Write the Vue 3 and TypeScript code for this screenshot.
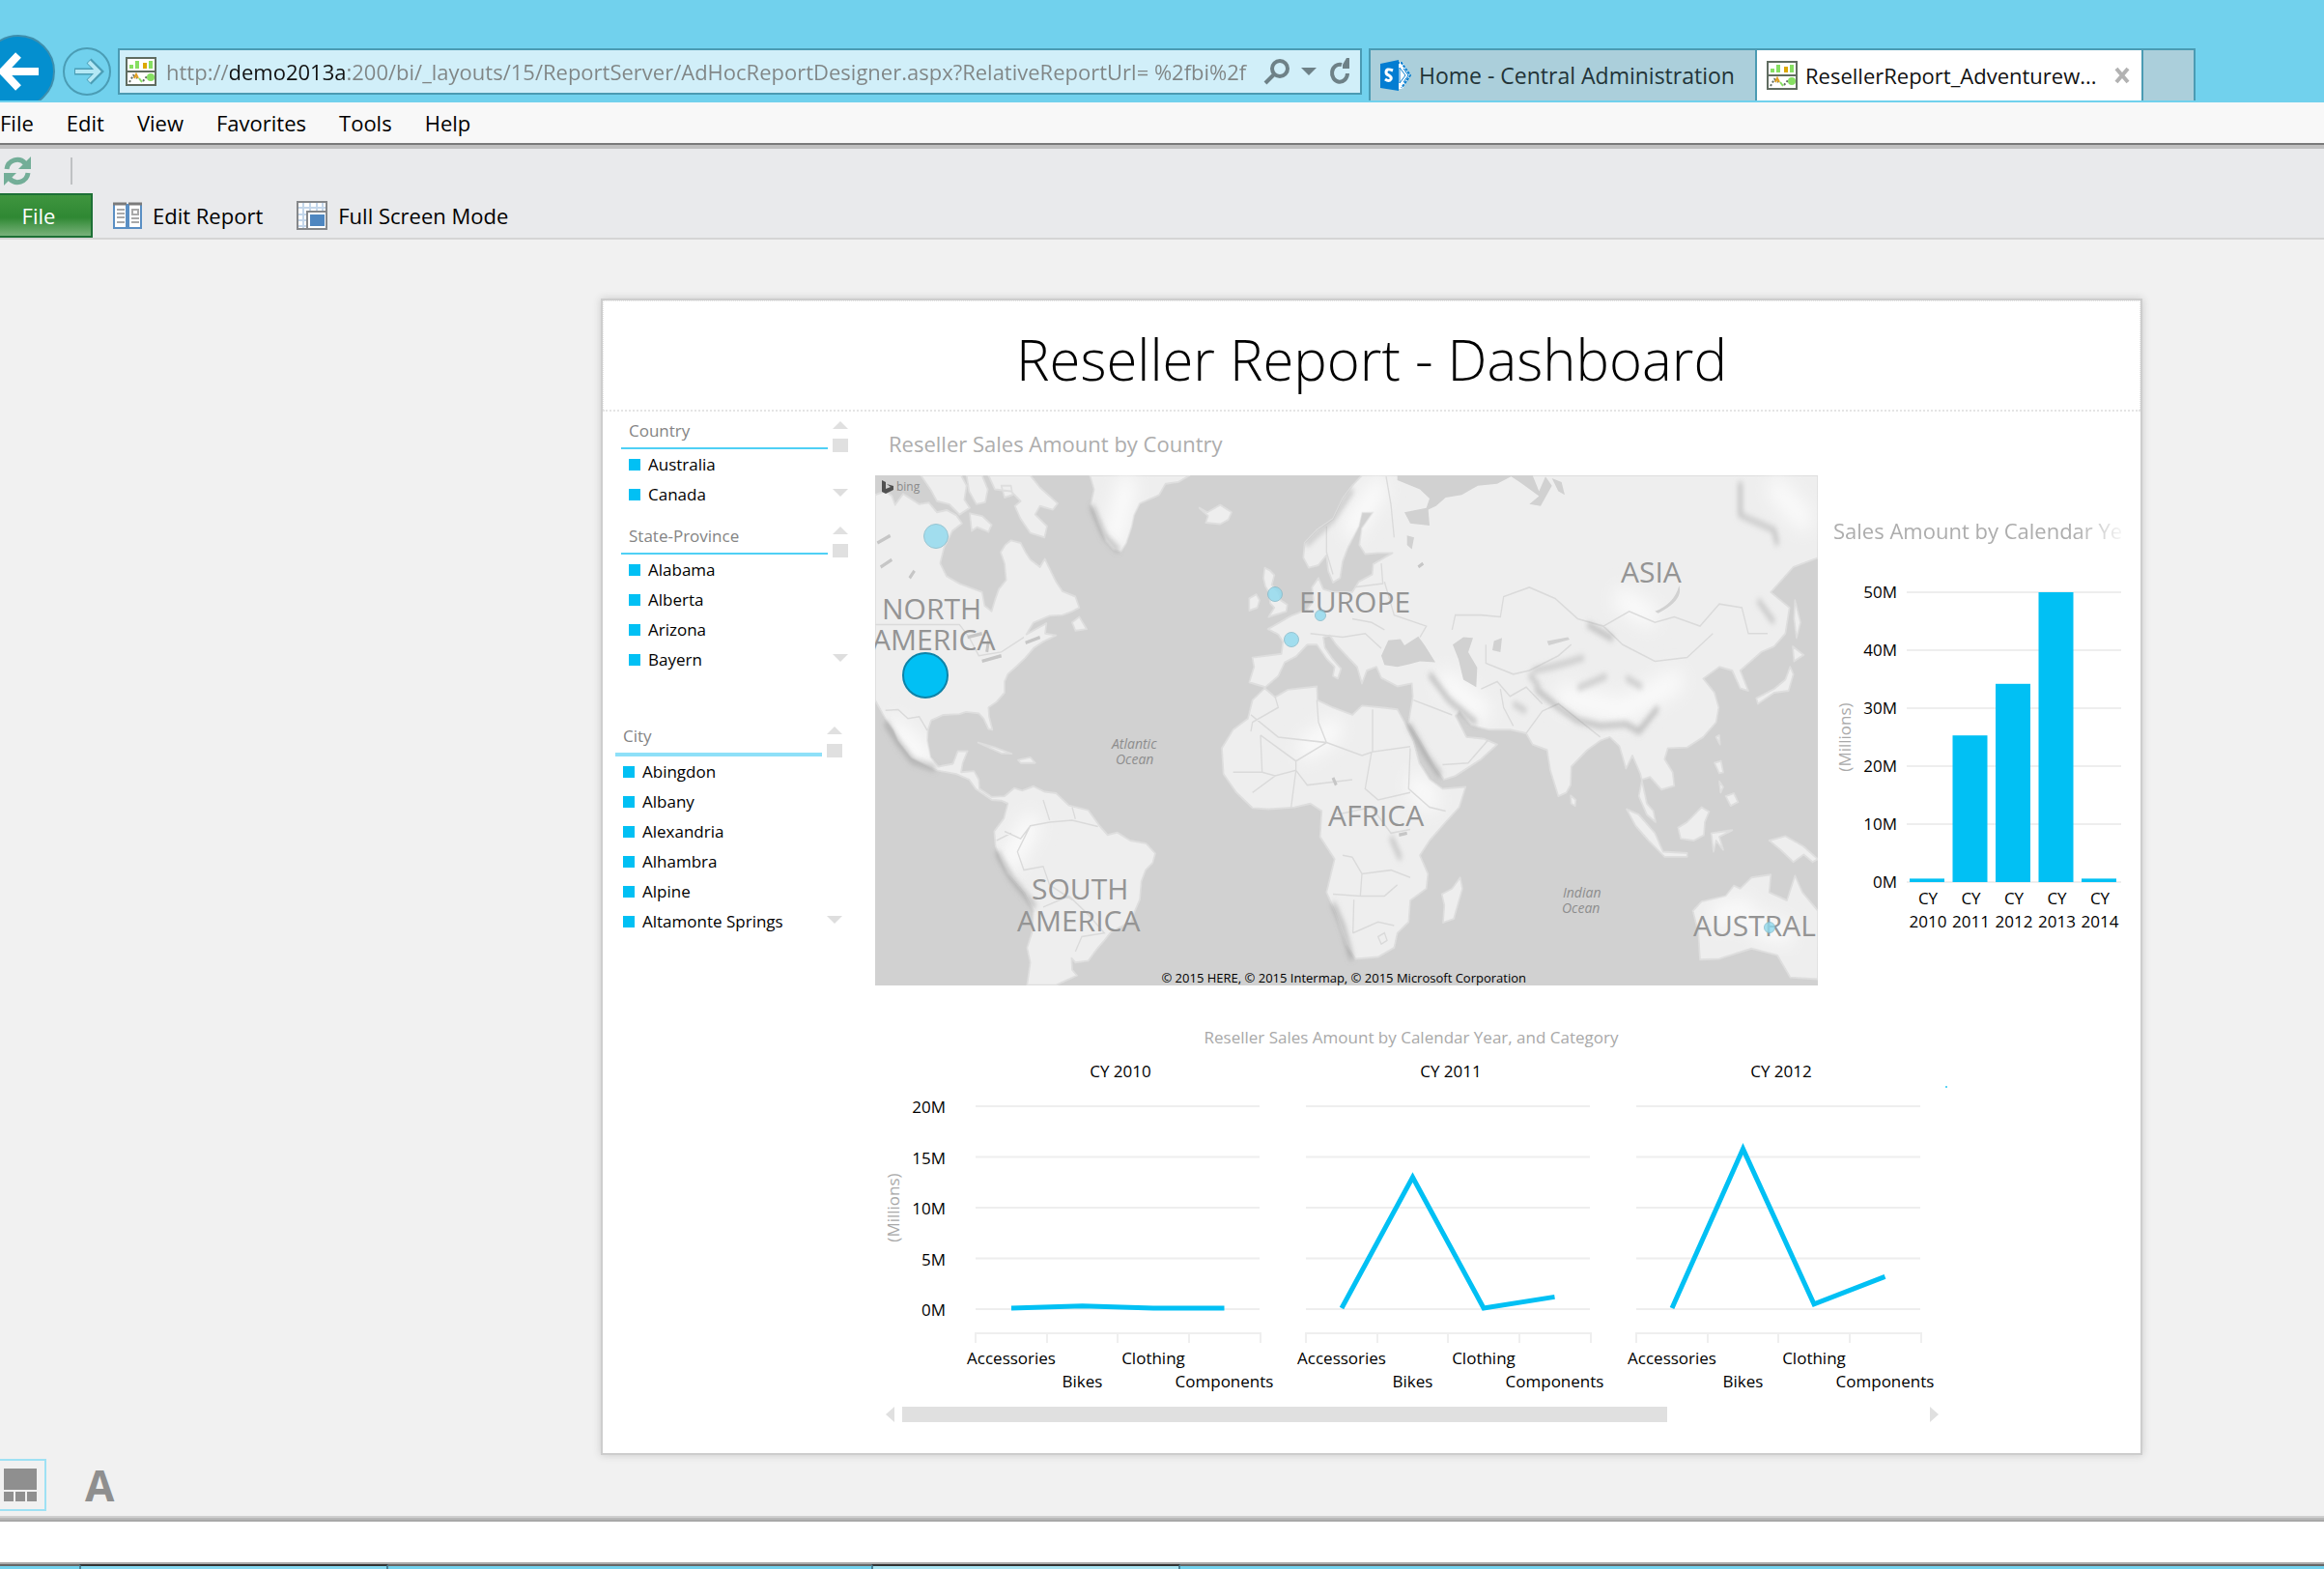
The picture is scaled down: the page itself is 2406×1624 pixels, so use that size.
<script setup lang="ts">
interface Slicer {
  id: string
  title: string
  items: string[]
}

interface MapLabel {
  text: string
  x: number
  y: number
  kind: 'land' | 'ocean'
}

const url =
  'http://demo2013a:200/bi/_layouts/15/ReportServer/AdHocReportDesigner.aspx?RelativeReportUrl= %2fbi%2f'

const menus = ['File', 'Edit', 'View', 'Favorites', 'Tools', 'Help']

const slicers: Slicer[] = [
  { id: 'country', title: 'Country', items: ['Australia', 'Canada'] },
  { id: 'state', title: 'State-Province', items: ['Alabama', 'Alberta', 'Arizona', 'Bayern'] },
  {
    id: 'city',
    title: 'City',
    items: ['Abingdon', 'Albany', 'Alexandria', 'Alhambra', 'Alpine', 'Altamonte Springs'],
  },
]

/* Map labels: left edge and top of the line on a 976 x 528 map */
const mapLabels: MapLabel[] = [
  { text: 'NORTH', x: 7, y: 122, kind: 'land' },
  { text: 'AMERICA', x: -3, y: 154, kind: 'land' },
  { text: 'EUROPE', x: 439, y: 115, kind: 'land' },
  { text: 'ASIA', x: 772, y: 84, kind: 'land' },
  { text: 'AFRICA', x: 469, y: 336, kind: 'land' },
  { text: 'SOUTH', x: 162, y: 412, kind: 'land' },
  { text: 'AMERICA', x: 147, y: 445, kind: 'land' },
  { text: 'AUSTRAL', x: 847, y: 450, kind: 'land' },
  { text: 'Atlantic', x: 245, y: 268, kind: 'ocean' },
  { text: 'Ocean', x: 249, y: 284, kind: 'ocean' },
  { text: 'Indian', x: 712, y: 422, kind: 'ocean' },
  { text: 'Ocean', x: 711, y: 438, kind: 'ocean' },
]

const bubbles = [
  { x: 63, y: 63, r: 13, faded: true },
  { x: 52, y: 207, r: 24, faded: false },
  { x: 414, y: 123, r: 8, faded: true },
  { x: 461, y: 145, r: 6, faded: true },
  { x: 431, y: 170, r: 8, faded: true },
  { x: 926, y: 468, r: 6, faded: true },
]

const pctX = (v: number) => `${(v / 976) * 100}%`
const pctY = (v: number) => `${(v / 528) * 100}%`

/* Landmasses and inland seas */
const land = [
  'M78 215L110 205L130 218L140 242L165 212L215 240L245 236L270 262L300 256L330 270L348 292L318 312L292 358L280 400L300 435L340 455L380 468L410 478L418 515L440 530L450 500L462 470L485 445L480 400L468 370L482 350L500 338L530 345L545 370L560 390L590 410L605 388L640 450L660 476L700 490L712 520L690 530L660 540L620 542L570 560L548 592L610 562L606 590L640 595L600 612L572 628L545 655L520 676L490 700L480 720L480 750L455 775L430 790L432 815L442 850L430 848L415 820L400 806L360 802L340 808L290 810L252 825L242 850L240 880L250 925L275 950L320 942L335 908L365 908L350 940L345 965L385 962L400 985L402 1010L440 1032L480 1030L510 1008L535 1015L570 1003L605 1018L640 1022L680 1055L740 1068L775 1110L800 1135L830 1128L870 1150L920 1158L948 1185L940 1210L918 1230L905 1260L900 1310L870 1370L840 1384L810 1398L790 1420L770 1440L740 1475L700 1480L688 1468L690 1500L705 1515L640 1541L550 1541L560 1480L550 1440L565 1400L570 1340L540 1290L490 1240L465 1195L452 1165L448 1125L478 1090L490 1050L470 1042L440 1040L390 1010L370 985L330 970L270 960L190 925L150 880L135 850L110 820L78 770Z',
  'M220 162L345 162L362 190L355 228L372 250L340 268L308 240L270 232L250 200ZM372 265L410 272L440 296L430 315L395 302L378 312ZM362 162L410 162L428 200L420 235L392 240L370 205ZM430 162L560 162L590 195L645 238L630 255L590 245L575 268L612 300L604 330L560 318L530 280L512 245L530 232L500 205L450 200Z',
  'M470 190L500 190L505 215L480 222Z',
  'M745 162L1055 162L1020 180L980 185L960 215L900 238L882 270L875 300L858 345L842 368L818 362L795 340L770 290L748 240L758 200Z',
  'M1085 250L1110 262L1150 242L1185 262L1175 282L1150 294L1105 290L1112 272Z',
  'M1240 495L1262 484L1272 500L1265 520L1240 528ZM1288 412L1305 420L1318 432L1310 458L1330 480L1338 500L1358 512L1355 530L1300 545L1318 520L1305 508L1302 480L1290 462L1284 440Z',
  'M1560 190L1530 225L1500 280L1450 310L1412 345L1408 385L1425 412L1455 405L1480 378L1485 420L1500 452L1522 440L1530 395L1545 360L1580 300L1590 262L1625 262L1590 305L1582 350L1600 375L1640 372L1685 372L1625 402L1622 430L1580 450L1560 478L1500 478L1470 470L1455 440L1435 465L1440 500L1420 525L1370 542L1330 562L1298 578L1330 592L1345 612L1340 645L1250 655L1255 680L1240 722L1290 735L1330 705L1350 668L1385 652L1420 620L1450 620L1480 658L1505 680L1500 705L1515 712L1525 685L1500 660L1475 628L1470 600L1490 595L1510 620L1540 648L1575 680L1590 725L1605 690L1635 680L1650 710L1700 733L1745 725L1748 760L1735 830L1770 880L1815 950L1845 985L1880 975L1960 930L2010 890L1970 875L1915 870L1880 812L1893 800L1930 838L1985 850L2050 850L2100 860L2120 890L2165 905L2175 960L2200 1030L2225 1020L2238 1000L2240 950L2290 905L2330 880L2360 870L2390 895L2410 955L2430 920L2455 970L2475 1050L2495 1070L2502 1100L2475 1080L2450 1030L2460 985L2485 978L2520 1012L2560 1002L2555 965L2530 930L2540 900L2600 898L2650 870L2690 830L2698 790L2685 750L2650 712L2700 680L2740 690L2765 738L2790 745L2765 690L2830 640L2870 625L2905 590L2918 520L2860 478L2930 410L3006 385L3006 162L1590 162Z',
  'M1288 738L1320 762L1360 742L1450 733L1452 770L1500 790L1560 810L1590 785L1650 790L1700 795L1722 830L1750 880L1768 940L1800 985L1840 1010L1912 1005L1892 1060L1850 1100L1800 1150L1770 1190L1795 1240L1790 1280L1740 1312L1735 1370L1700 1400L1690 1440L1640 1465L1570 1470L1540 1430L1510 1350L1480 1290L1505 1200L1460 1140L1465 1070L1430 1050L1380 1060L1300 1065L1250 1062L1200 1020L1160 970L1155 900L1190 850L1236 820L1250 770Z',
  'M1895 1250L1902 1280L1875 1362L1842 1372L1846 1325L1838 1295L1870 1280ZM2238 1028L2254 1040L2252 1056L2240 1050Z',
  'M2412 1065L2450 1080L2500 1130L2525 1180L2600 1184L2600 1194L2530 1194L2480 1150L2440 1110ZM2572 1115L2600 1100L2645 1060L2668 1072L2655 1100L2652 1135L2620 1150L2580 1145ZM2685 940L2705 935L2712 965L2700 968ZM2720 1030L2745 1022L2758 1046L2735 1056ZM2700 990L2712 1005L2704 1020ZM2675 1130L2740 1122L2700 1140L2712 1175L2690 1150L2682 1180ZM2855 1150L2905 1138L2960 1165L3006 1200L2990 1208L2962 1188L2930 1208L2890 1175ZM2690 870L2700 865L2702 890Z',
  'M2618 1340L2645 1315L2720 1300L2745 1272L2765 1280L2800 1250L2860 1242L2855 1290L2910 1312L2935 1245L2958 1290L3006 1340L3006 1525L2920 1520L2880 1460L2800 1442L2700 1470L2640 1472L2635 1400Z',
  'M2928 625L2962 648L2932 665ZM2920 680L2930 700L2915 745L2870 750L2820 780L2815 765L2870 740L2905 715ZM2935 500L2952 560L2940 602L2932 550Z',
  'M398 885L450 898L502 915L470 914ZM522 932L560 925L575 940L530 940ZM690 560L712 545L735 578L700 582Z',
].join('')

const seas = [
  'M1700 162L2060 162L2010 185L1950 190L1900 215L1850 222L1820 245L1796 255L1800 298L1740 292L1722 262L1790 250L1800 225L1770 200L1700 175Z',
  'M2048 162L2120 162L2140 205L2160 165L2180 190L2145 245L2110 240L2140 218L2080 180ZM2180 170L2210 180L2220 215L2200 205Z',
  'M1650 650L1672 608L1710 605L1722 622L1765 598L1785 622L1818 668L1770 665L1740 672L1700 680L1660 675Z',
  'M1872 620L1905 600L1935 602L1920 640L1948 682L1945 735L1905 715L1890 660Z',
  'M2000 610L2025 602L2020 640L1995 635ZM2165 610L2230 600L2235 606L2170 622Z',
  'M1730 325L1752 330L1745 362L1730 350ZM2500 530Q2560 510 2575 460Q2590 500 2510 535Z',
].join('')

const borders = [
  'M78 566L340 566L370 600L400 650L470 640L540 600',
  'M110 798L150 796L180 820L215 815L240 852',
  'M480 1125L530 1145L560 1110L620 1100L690 1095L770 1112M560 1110L520 1180L540 1230L600 1220L620 1270L690 1310M455 1150L500 1130M600 1040L620 1095M690 1060L700 1092M600 1330L680 1300L740 1350L790 1400L720 1410L700 1450',
  'M1245 810L1330 870L1480 885L1590 920M1320 760L1330 790L1250 830L1245 855M1450 770L1455 830L1480 885L1385 935L1385 960M1275 865L1280 965L1190 965M1275 865L1385 935M1623 795L1623 910L1740 896M1590 920L1623 910M1620 910L1600 1010L1640 1040L1740 1020M1280 965L1320 975L1385 960L1420 1000L1560 985M1320 975L1250 1020M1385 960L1370 1060M1740 900L1735 1010L1800 1060L1850 1070M1530 1190L1560 1195L1590 1240L1680 1230L1740 1250M1590 1240L1585 1300L1500 1295M1585 1300L1660 1300L1700 1270M1562 1400L1565 1310M1562 1400L1640 1370L1690 1380M1510 1080L1620 1060L1680 1130L1740 1120M1640 1410L1660 1400L1668 1420L1650 1430Z',
  'M1480 300L1480 370L1500 430M1665 165L1680 240L1690 330M1650 400L1655 455L1560 465M1660 450L1690 540L1790 570L1770 600M1430 590L1530 600L1600 590L1650 630M1560 550L1620 560L1660 580M1870 580L1880 540L1960 540L2020 545L2030 490L2110 465L2190 495L2260 550L2340 570L2420 530L2500 560L2560 545L2640 570L2700 510L2770 520L2790 590L2850 590M2340 570L2400 620L2500 665L2600 655L2680 590M1975 620L1975 670L2060 700L2110 690L2200 650L2240 620M1960 740L2010 720L2050 760L2100 735L2150 780M1750 770L1810 790L1870 810M1840 945L1920 940L1990 870M2100 860L2150 800L2200 780L2330 870M2020 740L2030 790L2060 840',
].join('')

const ridges = [
  'M110 830L150 885L195 935L265 955',
  'M455 1180L500 1250L575 1330',
  'M750 245L790 325L835 366',
  'M1800 700L1860 770L1945 832',
  'M1735 835L1790 920L1835 975',
  'M2130 740L2200 790L2260 825L2330 840L2410 835L2450 855L2510 790',
  'M2290 565L2370 605',
  'M1500 1320L1530 1380L1558 1470',
].join('')

const slopes = [
  'M2765 180L2765 270L2870 310L2880 350',
  'M2120 690L2180 680L2280 655',
  'M2260 738L2350 705M2410 710L2460 735M2060 780L2100 800M2140 735L2110 700',
  'M1560 200L1500 280L1415 350M2820 500L2870 560M1680 1140L1710 1200',
].join('')

const lakes = 'M85 345L125 325M95 410L130 390M185 440L200 420M410 665L470 650M365 600L410 590M430 610L425 640M1705 1135L1730 1130M1765 410L1780 400M545 615L590 600M1500 980L1510 1000'

const highlights = 'M1960 800L1850 720M2220 760L2400 800L2560 720M1500 850L1420 900M820 330L860 190M140 850L230 930M2820 1380L2900 1400M2400 500L2480 540M1640 200L1560 300M2880 200L2960 280M560 1110L500 1200M1760 1000L1800 1040M2700 1350L2780 1340'

/* Column chart, values in millions */
const columns = [
  { year: '2010', value: 0.6 },
  { year: '2011', value: 25.3 },
  { year: '2012', value: 34.2 },
  { year: '2013', value: 50 },
  { year: '2014', value: 0.6 },
]
const columnTicks = [50, 40, 30, 20, 10, 0]
const columnY = (v: number) => 348 - v * 6

/* Line chart small multiples, values in millions */
const panels = [
  { title: 'CY 2010', values: [0.1, 0.3, 0.1, 0.1] },
  { title: 'CY 2011', values: [0.1, 13, 0.1, 1.2] },
  { title: 'CY 2012', values: [0.1, 15.8, 0.5, 3.2] },
]
const categories = ['Accessories', 'Bikes', 'Clothing', 'Components']
const lineTicks = [20, 15, 10, 5, 0]
const lineY = (v: number) => 335 - v * 10.5
const panelX = (i: number) => 104 + i * 342
const pointX = (i: number) => 37 + i * 73.5
const points = (values: number[]) =>
  values.map((v, i) => `${pointX(i)},${lineY(v)}`).join(' ')
</script>

<template>
  <div class="window">
    <header class="chrome">
      <button class="back" type="button" aria-label="Back">
        <svg width="76" height="76" viewBox="0 0 76 76">
          <circle cx="38" cy="38" r="37" fill="#048fcf" stroke="#3f8fad" stroke-width="2" />
          <path d="M59 38H23M38 21L22 38L38 55" fill="none" stroke="#fff" stroke-width="8" />
        </svg>
      </button>
      <button class="forward" type="button" aria-label="Forward">
        <svg width="52" height="52" viewBox="0 0 52 52">
          <circle cx="26" cy="26" r="24" fill="none" stroke="#4b9db5" stroke-width="2" />
          <path d="M13 26H38M28 15L39 26L28 37" fill="none" stroke="#4b9db5" stroke-width="7" />
          <path d="M14 26H38M28 16L38 26L28 36" fill="none" stroke="#b4e8f5" stroke-width="4" />
        </svg>
      </button>
      <form class="address" @submit.prevent>
        <svg class="site-icon" width="32" height="30" viewBox="0 0 32 30">
          <path d="M1 1H31V29H1Z" fill="#fff" stroke="#606c60" stroke-width="2" />
          <path d="M1 15H31" stroke="#606c60" stroke-width="2" />
          <path d="M4 8H8V12H4ZM10 4H14V12H10ZM24 4H28V12H24Z" fill="#86df62" />
          <path d="M18 6H22V12H18Z" fill="#dca800" />
          <path d="M4 26L8 19L12 22M18 25L23 19" fill="none" stroke="#606c60" stroke-width="2" stroke-dasharray="2 2" />
          <path d="M9 22L11 18L13 22" fill="none" stroke="#e0a020" stroke-width="2" />
          <path d="M14 22L17 26" stroke="#86df62" stroke-width="2" />
          <circle cx="26" cy="21" r="4" fill="#86df62" />
        </svg>
        <input class="url" type="text" aria-label="Address" :value="url" />
        <button type="button" aria-label="Search">
          <svg width="28" height="28" viewBox="0 0 28 28" fill="none" stroke="#6e8187" stroke-width="4">
            <circle cx="17" cy="11" r="8" />
            <path d="M11 17L2 26" />
          </svg>
        </button>
        <button type="button" aria-label="Show address list">
          <svg width="16" height="10" viewBox="0 0 16 10"><path d="M0 1H16L8 9Z" fill="#6e8187" /></svg>
        </button>
        <button type="button" aria-label="Refresh page">
          <svg width="24" height="28" viewBox="0 0 24 28">
            <path d="M13 7A8 9 0 1 0 19 16" fill="none" stroke="#6e8187" stroke-width="4" />
            <path d="M14 11V7L18 0H21V11Z" fill="#6e8187" />
          </svg>
        </button>
      </form>
      <nav class="tabs" aria-label="Tabs">
        <a class="tab" href="#">
          <svg width="32" height="32" viewBox="0 0 32 32">
            <path d="M15 2H23L31 16L23 30H15Z" fill="#fff" />
            <path d="M17 3H22L31 16L22 29" fill="none" stroke="#0a7fd0" stroke-width="2" stroke-dasharray="3 1" />
            <path d="M0 4L19 0V32L0 29Z" fill="#037dd2" />
            <path d="M13 11Q6 8 6 13Q6 15 9 16Q12 18 11 20Q9 23 5 20" fill="none" stroke="#fff" stroke-width="3" />
            <path d="M20 8L26 16L20 24ZM24 9L29 16L24 23" fill="#fff" stroke="#0a7fd0" stroke-width="1" />
          </svg>
          <span>Home - Central Administration</span>
        </a>
        <a class="tab active" href="#" aria-current="page">
          <svg width="32" height="30" viewBox="0 0 32 30">
            <path d="M1 1H31V29H1Z" fill="#fff" stroke="#606c60" stroke-width="2" />
            <path d="M1 15H31" stroke="#606c60" stroke-width="2" />
            <path d="M4 8H8V12H4ZM10 4H14V12H10ZM24 4H28V12H24Z" fill="#86df62" />
            <path d="M18 6H22V12H18Z" fill="#dca800" />
            <path d="M4 26L8 19L12 22M18 25L23 19" fill="none" stroke="#606c60" stroke-width="2" stroke-dasharray="2 2" />
            <path d="M9 22L11 18L13 22" fill="none" stroke="#e0a020" stroke-width="2" />
            <path d="M14 22L17 26" stroke="#86df62" stroke-width="2" />
            <circle cx="26" cy="21" r="4" fill="#86df62" />
          </svg>
          <span>ResellerReport_Adventurew...</span>
          <svg class="close" width="18" height="18" viewBox="0 0 18 18">
            <path d="M3 2L15 16M15 2L3 16" stroke="#b2b2b2" stroke-width="4" />
          </svg>
        </a>
        <button class="new-tab" type="button" aria-label="New tab"></button>
      </nav>
    </header>

    <nav class="menubar" aria-label="Menu">
      <button v-for="m in menus" :key="m" type="button">{{ m }}</button>
    </nav>

    <section class="ribbon">
      <div class="quick">
        <button type="button" aria-label="Refresh">
          <svg width="30" height="30" viewBox="0 0 30 30">
            <path d="M4 13A11 11 0 0 1 23 7" fill="none" stroke="#73ae98" stroke-width="5" />
            <path d="M29 0V13H16Z" fill="#73ae98" />
            <path d="M26 17A11 11 0 0 1 7 23" fill="none" stroke="#73ae98" stroke-width="5" />
            <path d="M1 30V17H14Z" fill="#73ae98" />
          </svg>
        </button>
        <span class="divider"></span>
      </div>
      <div class="commands">
        <button class="file" type="button">File</button>
        <button class="command" type="button">
          <svg width="30" height="28" viewBox="0 0 30 28">
            <path d="M1 2V27H14V2M16 2V27H29V2" fill="#fff" stroke="#5a8fc4" stroke-width="2" />
            <path d="M0 2H14M16 2H30" stroke="#7b7b7b" stroke-width="3" />
            <path d="M4 8H12M4 12H12M4 16H12M4 21H12M19 17H27M19 21H27" stroke="#a9a9a9" stroke-width="2" />
            <path d="M20 8H26V13H20Z" fill="none" stroke="#a9a9a9" stroke-width="2" />
          </svg>
          <span>Edit Report</span>
        </button>
        <button class="command" type="button">
          <svg width="32" height="30" viewBox="0 0 32 30">
            <path d="M1 1H31V29H1Z" fill="#fff" stroke="#85878a" stroke-width="2" />
            <path d="M2 7H30M7 2V28M14 2V10M21 2V10M27 2V10M2 14H10M2 20H10M2 26H10" stroke="#c3d6ea" stroke-width="2" />
            <path d="M11 11H31V29H11Z" fill="#fff" stroke="#85878a" stroke-width="2" />
            <path d="M14 14H29V26H14Z" fill="#4e86c0" />
          </svg>
          <span>Full Screen Mode</span>
        </button>
      </div>
    </section>

    <main class="stage">
      <article class="report">
        <h1>Reseller Report - Dashboard</h1>
        <div class="body">
          <aside class="slicers">
            <section v-for="s in slicers" :key="s.id" class="slicer" :class="s.id">
              <div class="slicer-list">
                <h2>{{ s.title }}</h2>
                <ul>
                  <li v-for="item in s.items" :key="item">{{ item }}</li>
                </ul>
              </div>
              <div class="scroll-v">
                <svg width="16" height="8" viewBox="0 0 16 8"><path d="M8 0L16 8H0Z" fill="#e0e0e0" /></svg>
                <span class="thumb-v"></span>
                <svg class="down" width="16" height="8" viewBox="0 0 16 8"><path d="M0 0H16L8 8Z" fill="#dedede" /></svg>
              </div>
            </section>
          </aside>

          <div class="visuals">
            <div class="top-row">
              <figure class="map-figure">
                <figcaption>Reseller Sales Amount by Country</figcaption>
                <div class="map">
                  <svg class="terrain" viewBox="78 162 2928 1380" preserveAspectRatio="none">
                    <defs>
                      <clipPath id="land-clip"><path :d="land" /></clipPath>
                      <filter id="soft" x="-5%" y="-5%" width="110%" height="110%">
                        <feGaussianBlur stdDeviation="8" />
                      </filter>
                      <filter id="haze" x="-5%" y="-5%" width="110%" height="110%">
                        <feGaussianBlur stdDeviation="26" />
                      </filter>
                      <filter id="edge"><feGaussianBlur stdDeviation="2" /></filter>
                    </defs>
                    <rect x="78" y="162" width="2928" height="1380" fill="#d1d1d1" />
                    <path :d="land" fill="#eeeeee" stroke="#dedede" stroke-width="5" stroke-linejoin="round" filter="url(#edge)" />
                    <g clip-path="url(#land-clip)">
                      <path :d="highlights" fill="none" stroke="#fbfbfb" stroke-width="60" stroke-linecap="round" filter="url(#haze)" />
                      <path :d="borders" fill="none" stroke="#dadada" stroke-width="4" />
                      <path :d="slopes" fill="none" stroke="#b4b4b4" stroke-opacity="0.7" stroke-width="14" stroke-linejoin="round" filter="url(#soft)" />
                      <path :d="seas" fill="#d1d1d1" filter="url(#edge)" />
                    </g>
                    <path :d="ridges" fill="none" stroke="#8c8c8c" stroke-opacity="0.55" stroke-width="14" stroke-linejoin="round" filter="url(#soft)" />
                    <path :d="lakes" fill="none" stroke="#c6c6c6" stroke-width="9" filter="url(#edge)" />
                  </svg>
                  <span
                    v-for="(l, i) in mapLabels"
                    :key="i"
                    class="map-label"
                    :class="l.kind"
                    :style="{ left: pctX(l.x), top: pctY(l.y) }"
                  >{{ l.text }}</span>
                  <span
                    v-for="(b, i) in bubbles"
                    :key="i"
                    class="bubble"
                    :class="{ faded: b.faded }"
                    :style="{ left: pctX(b.x), top: pctY(b.y), width: `${b.r * 2}px`, height: `${b.r * 2}px` }"
                  ></span>
                  <span class="bing">
                    <svg width="14" height="14" viewBox="0 0 14 14"><path d="M1 0L5 2V9L10 7L6 4L13 6V10L5 14L1 12Z" fill="#505050" /></svg>
                    bing
                  </span>
                  <small class="credit">© 2015 HERE, © 2015 Intermap, © 2015 Microsoft Corporation</small>
                </div>
              </figure>

              <figure class="column-figure">
                <figcaption>Sales Amount by Calendar Year</figcaption>
                <svg class="chart" viewBox="0 0 334 455">
                  <g v-for="t in columnTicks" :key="t">
                    <line x1="92" x2="314" :y1="columnY(t)" :y2="columnY(t)" stroke="#eeeeee" stroke-width="2" />
                    <text x="82" :y="columnY(t) + 6" text-anchor="end">{{ t }}M</text>
                  </g>
                  <g v-for="(c, i) in columns" :key="c.year">
                    <rect :x="95 + i * 44.5" :y="columnY(c.value)" width="36" :height="348 - columnY(c.value)" fill="#01c0f4" />
                    <text :x="114 + i * 44.5" y="371" text-anchor="middle">CY</text>
                    <text :x="114 + i * 44.5" y="395" text-anchor="middle">{{ c.year }}</text>
                  </g>
                  <text class="axis-title" transform="translate(34 198) rotate(-90)" text-anchor="middle">(Millions)</text>
                </svg>
              </figure>
            </div>

            <figure class="line-figure">
              <svg class="chart" viewBox="0 0 1310 428">
                <text class="axis-title" x="555" y="60" text-anchor="middle">Reseller Sales Amount by Calendar Year, and Category</text>
                <text v-for="t in lineTicks" :key="t" x="73" :y="lineY(t) + 7" text-anchor="end">{{ t }}M</text>
                <text class="axis-title" transform="translate(25 230) rotate(-90)" text-anchor="middle">(Millions)</text>
                <g v-for="(p, i) in panels" :key="p.title" :transform="`translate(${panelX(i)} 0)`">
                  <text x="150" y="95" text-anchor="middle">{{ p.title }}</text>
                  <line v-for="t in lineTicks" :key="t" x1="0" x2="294" :y1="lineY(t)" :y2="lineY(t)" stroke="#eeeeee" stroke-width="2" />
                  <path d="M0 370V360H295V370M74 360V370M147 360V370M221 360V370" fill="none" stroke="#efefef" stroke-width="2" />
                  <polyline :points="points(p.values)" fill="none" stroke="#01c0f4" stroke-width="5" />
                  <text
                    v-for="(c, j) in categories"
                    :key="c"
                    :x="pointX(j)"
                    :y="j % 2 ? 416 : 392"
                    text-anchor="middle"
                  >{{ c }}</text>
                </g>
                <rect x="1108" y="104" width="2" height="2" fill="#5bd4f5" />
              </svg>
              <div class="scroll-h">
                <svg width="9" height="16" viewBox="0 0 9 16"><path d="M9 0V16L0 8Z" fill="#e0e0e0" /></svg>
                <div class="track-h"><div class="thumb-h"></div></div>
                <svg width="9" height="16" viewBox="0 0 9 16"><path d="M0 0L9 8L0 16Z" fill="#e0e0e0" /></svg>
              </div>
            </figure>
          </div>
        </div>
      </article>

      <div class="view-bar">
        <button class="tiles" type="button" aria-label="Views">
          <svg width="34" height="34" viewBox="0 0 34 34">
            <path d="M0 0H34V22H0ZM0 24H10V34H0ZM12 24H22V34H12ZM24 24H34V34H24Z" fill="#8f8f8f" />
          </svg>
        </button>
        <button class="letter" type="button">A</button>
      </div>
    </main>

    <div class="gutter"></div>
    <footer class="taskbar">
      <span class="task"></span>
      <span class="task lit"></span>
    </footer>
  </div>
</template>

<style>
body {
  margin: 0;
  background: #f1f1f1;
}
</style>

<style scoped>
.window {
  font-family: "Open Sans", "Noto Sans", sans-serif;
  color: #000;
  overflow: hidden;
}
button {
  border: 0;
  padding: 0;
  background: none;
  font: inherit;
  color: inherit;
}
svg {
  display: block;
  flex: none;
}

/* Browser chrome */
.chrome {
  display: flex;
  align-items: flex-start;
  height: 106px;
  overflow: hidden;
  background: #71d1ed;
}
.back {
  flex: none;
  height: 68px;
  overflow: hidden;
  margin: 36px 0 0 -19px;
}
.forward {
  flex: none;
  margin: 48px 6px 0 7px;
}
.address {
  display: flex;
  align-items: center;
  flex: 1;
  height: 44px;
  margin-top: 50px;
  padding: 0 8px 0 6px;
  border: 2px solid #4b9bb3;
  background: #d1eff9;
}
.url {
  flex: 1;
  min-width: 0;
  height: 40px;
  margin: 0 10px;
  padding: 0;
  border: 0;
  outline: 0;
  font: 22px/40px "Open Sans", "Noto Sans", sans-serif;
  color: transparent;
  background: linear-gradient(to right, #808585 66px, #111 66px, #111 187px, #808585 187px);
  background-clip: text;
}
.address button + button {
  margin-left: 11px;
}
.address button:last-child {
  margin-left: 13px;
}
.tabs {
  display: flex;
  flex: none;
  width: 854px;
  height: 52px;
  margin: 50px 133px 0 7px;
  border-top: 2px solid #4b9bb3;
  border-left: 2px solid #4b9bb3;
}
.tab {
  display: flex;
  align-items: center;
  flex: 1;
  gap: 8px;
  padding-left: 10px;
  border-right: 2px solid #4b9bb3;
  background: #abcfdb;
  color: #223438;
  font-size: 23px;
  white-space: nowrap;
  text-decoration: none;
}
.tab.active {
  background: #fff;
  color: #111;
  font-size: 22px;
}
.close {
  margin-left: auto;
  margin-right: 11px;
}
.new-tab {
  width: 54px;
  background: #abcfdb;
  border-right: 2px solid #4b9bb3;
}
.menubar {
  display: flex;
  gap: 34px;
  height: 42px;
  background: #f8f8f8;
  border-bottom: 2px solid #7a7a7a;
  font-size: 22px;
  line-height: 42px;
}

/* Report viewer ribbon */
.ribbon {
  height: 92px;
  border-top: 4px solid #c0c0c0;
  border-bottom: 2px solid #d5d5d5;
  background: #e9eaec;
}
.quick {
  display: flex;
  align-items: center;
  gap: 40px;
  height: 46px;
  padding-left: 3px;
}
.divider {
  width: 2px;
  height: 28px;
  background: #bfc1c3;
}
.commands {
  display: flex;
  align-items: center;
  height: 46px;
  font-size: 22px;
}
.file {
  width: 96px;
  height: 46px;
  padding-right: 14px;
  border: 2px solid #1d7036;
  border-left: 0;
  background: linear-gradient(#3f953f, #2f8833 55%, #78b27a);
  color: #fff;
}
.command {
  display: flex;
  align-items: center;
  gap: 11px;
  margin-left: 21px;
}
.command + .command {
  margin-left: 35px;
}

/* Report canvas */
.stage {
  padding: 61px 188px 5px 0;
  background: #f1f1f1;
}
.report {
  margin-left: 622px;
  border: 2px solid #cdcdcd;
  background: #fff;
  box-shadow: 0 0 8px #c9c9c9;
}
h1 {
  margin: 0;
  height: 112px;
  border: 2px dotted #e4e4e4;
  border-width: 1px 1px 2px;
  text-align: center;
  font-size: 58px;
  font-weight: 300;
  line-height: 120px;
}
.body {
  display: flex;
}
.slicers {
  flex: none;
  width: 282px;
  padding-top: 8px;
  box-sizing: border-box;
  font-size: 17px;
}
.slicer {
  display: flex;
  gap: 5px;
  margin: 0 0 16px 19px;
}
.slicer.state {
  margin-bottom: 52px;
}
.slicer.city {
  margin-left: 13px;
}
.slicer-list {
  width: 214px;
}
h2 {
  margin: 0;
  padding: 0 0 5px 8px;
  border-bottom: 2px solid #4fd0f5;
  font-size: 17px;
  font-weight: 400;
  line-height: 24px;
  color: #848484;
}
.city h2 {
  border-bottom: 4px solid #8ee0f8;
}
ul {
  margin: 0;
  padding: 0 0 0 8px;
  list-style: none;
}
li {
  display: flex;
  align-items: center;
  gap: 8px;
  line-height: 31px;
}
li::before {
  content: "";
  width: 12px;
  height: 12px;
  background: #01c0f4;
}
.scroll-v {
  display: flex;
  flex-direction: column;
  gap: 10px;
  padding: 2px 0 13px;
}
.thumb-v {
  width: 16px;
  height: 14px;
  background: #e0e0e0;
}
.down {
  margin-top: auto;
}
.visuals {
  flex: 1;
  min-width: 0;
}
.top-row {
  display: flex;
}
figure {
  margin: 0;
}
figcaption {
  font-size: 22px;
  line-height: 32px;
  color: #adadad;
  white-space: nowrap;
}
.map-figure {
  flex: 1;
  min-width: 0;
}
.map-figure figcaption {
  padding: 17px 0 17px 14px;
}
.map {
  position: relative;
  height: 528px;
  overflow: hidden;
}
.terrain {
  width: 100%;
  height: 100%;
}
.map-label {
  position: absolute;
  line-height: 32px;
  white-space: nowrap;
}
.map-label.land {
  font-size: 30px;
  font-weight: 500;
  color: #949494;
}
.map-label.ocean {
  font-size: 14px;
  font-style: italic;
  line-height: 20px;
  color: #8d8d8d;
}
.bubble {
  position: absolute;
  box-sizing: border-box;
  transform: translate(-50%, -50%);
  border: 2px solid #0e83a8;
  border-radius: 50%;
  background: #01c0f4;
}
.bubble.faded {
  border: 1px solid #83b9c9;
  background: #8fdaef;
  opacity: 0.8;
}
.bing {
  position: absolute;
  left: 6px;
  top: 4px;
  display: flex;
  align-items: center;
  gap: 2px;
  font-size: 12px;
  line-height: 16px;
  color: #8a8a8a;
}
.credit {
  position: absolute;
  right: 302px;
  bottom: 0;
  font-size: 13px;
  line-height: 16px;
  white-space: nowrap;
}
.column-figure {
  flex: none;
  width: 334px;
}
.column-figure figcaption {
  margin: 107px 18px 0 16px;
  overflow: hidden;
  mask-image: linear-gradient(to right, #000 250px, transparent 305px);
}
.chart {
  width: 100%;
  font-size: 17px;
}
.axis-title {
  fill: #a9a9a9;
}
.scroll-h {
  display: flex;
  gap: 8px;
  margin: 8px 209px 32px 11px;
}
.track-h {
  flex: 1;
  height: 16px;
}
.thumb-h {
  width: 75%;
  height: 100%;
  background: #e0e0e0;
}

/* View switcher and taskbar */
.view-bar {
  display: flex;
  gap: 40px;
  margin-top: 4px;
}
.tiles {
  box-sizing: border-box;
  width: 48px;
  height: 54px;
  padding-left: 4px;
  border: 2px solid #9ee1f4;
  border-left: 0;
}
.letter {
  font-size: 44px;
  font-weight: 700;
  line-height: 54px;
  color: #8f8f8f;
}
.gutter {
  height: 48px;
  border-bottom: 2px solid #aaa;
  background: linear-gradient(#cfcfcf 2px, #b8b8b8 2px, #b8b8b8 4px, #a8a8a8 4px, #a8a8a8 6px, #fff 6px);
}
.taskbar {
  display: flex;
  gap: 500px;
  height: 4px;
  padding-left: 82px;
  border-top: 2px solid #666;
  background: #71d1ed;
}
.task {
  width: 316px;
  height: 4px;
  margin-top: -2px;
  border: 2px solid #4b8296;
  border-top-color: #333;
  border-bottom: 0;
  background: #84d8f0;
}
.task.lit {
  background: #a8e4f2;
}
</style>
